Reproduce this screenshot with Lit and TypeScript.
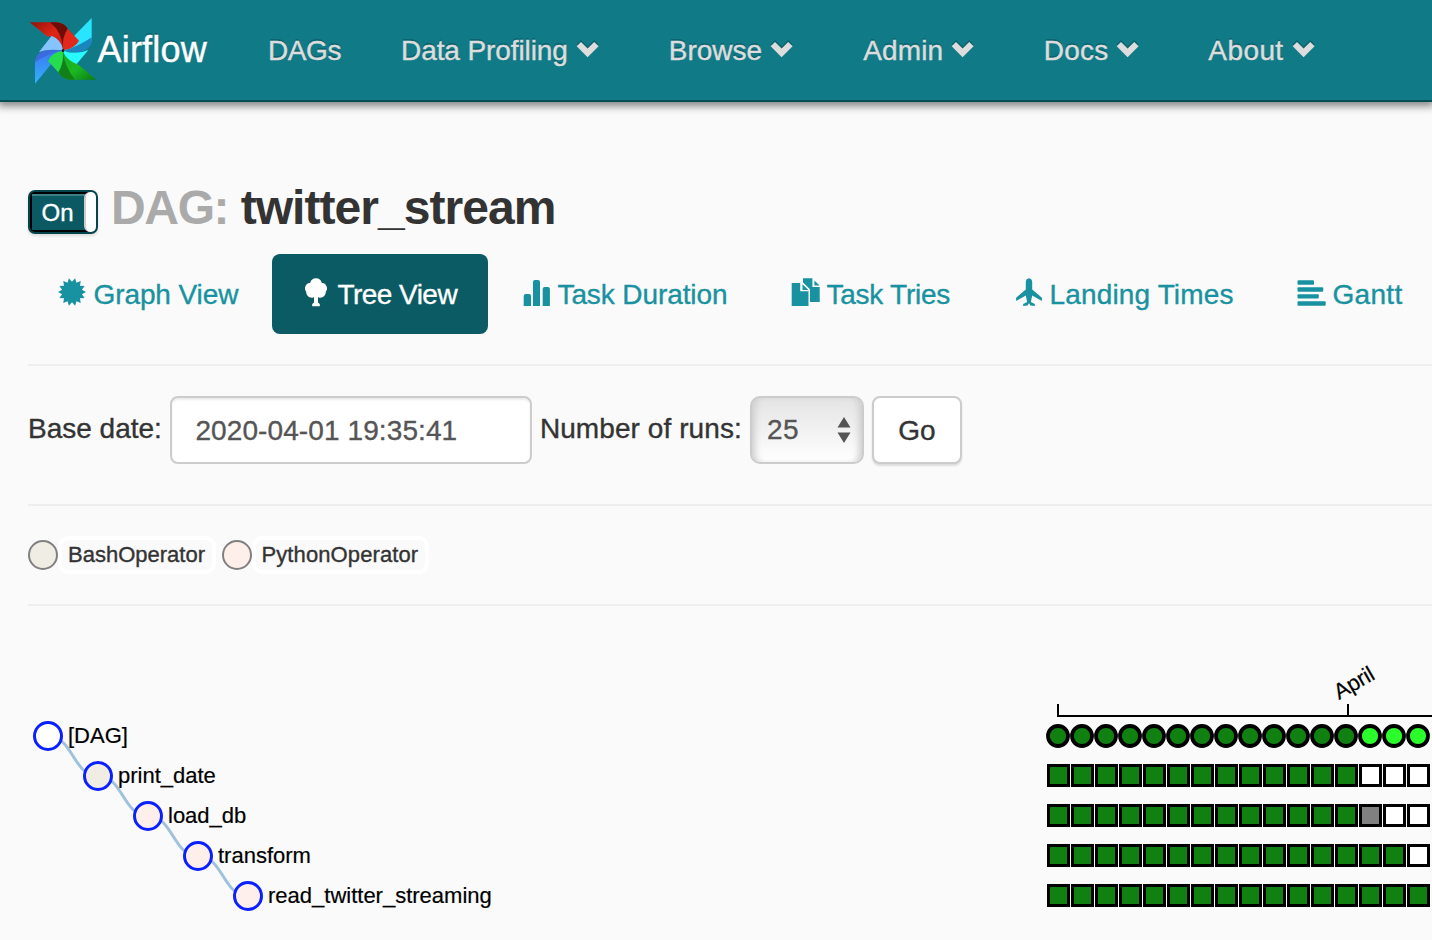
import { LitElement, html, svg, css } from "lit";
import { customElement } from "lit/decorators.js";

const spikes = (() => {
  const pts: string[] = [];
  for (let i = 0; i < 28; i++) {
    const a = (Math.PI / 14) * (i + 1);
    const r = i % 2 === 0 ? 14 : 10.2;
    pts.push(`${(14 + r * Math.sin(a)).toFixed(2)},${(14 - r * Math.cos(a)).toFixed(2)}`);
  }
  return pts.join(" ");
})();

const icons: Record<string, unknown> = {
  graph: svg`<polygon points=${spikes} />`,
  tree: svg`<path d="M14 .3c3 0 5.200 1.800 5.700 4.400 3 .2 5.300 2.700 5.300 5.700 0 1.300-.5 2.400-1.200 3.300.2 3.800-3.500 6.800-7 5.800l-.8-.5v5.500l1.800 1.600v2.100h-7.600v-2.100l1.800-1.600V19l-.8.5c-3.500 1-7.200-2-7-5.800C3.500 12.800 3 11.700 3 10.400c0-3 2.300-5.500 5.300-5.700C8.800 2.100 11 .3 14 .3z"/>`,
  bars: svg`<path d="M1.700 28V18q0-2 2-2h3.300q2 0 2 2v10zM11 28V4q0-2 2-2h3q2 0 2 2v24zM20.700 28V11q0-2 2-2h3.200q2 0 2 2v17z"/>`,
  copy: svg`<path d="M.7 5h8.500v8.300h8.300V28H.7zM11.500 6.300l5.900 5.700h-5.900zM12 .3h9.400v8.600h7.300v15H19V11.200L12 4.400zM23.400 2.600l5.200 4.900h-5.200z"/>`,
  plane: svg`<path d="M15 .3q3.200.4 3.200 4v7.200l9.700 8.300v3.100l-9.700-5.400-1.300 6.600 3.900 2v1.800l-4.300-.4L15 25.300l-1.500 2.200-4.300.4v-1.800l3.900-2-1.300-6.600-9.700 5.400v-3.100l9.700-8.300V4.300q0-3.600 3.200-4z"/>`,
  gantt: svg`<rect x=".5" y="2.200" width="16.500" height="4.600" rx="1"/><rect x=".5" y="9.200" width="25.700" height="4.500" rx="1"/><rect x=".5" y="16.200" width="21.300" height="4.400" rx="1"/><rect x=".5" y="23.300" width="28.200" height="4.500" rx="1"/>`,
};

const menu: [string, string][] = [
  ["DAGs", "dags"],
  ["Data Profiling", "data"],
  ["Browse", "browse"],
  ["Admin", "admin"],
  ["Docs", "docs"],
  ["About", "about"],
];

const tabs = [
  ["graph", "Graph View"],
  ["tree", "Tree View"],
  ["bars", "Task Duration"],
  ["copy", "Task Tries"],
  ["plane", "Landing Times"],
  ["gantt", "Gantt"],
];

const GREEN = "#108010";
const tasks = [
  { name: "[DAG]", fill: "#fff", blank: 0, queued: 0 },
  { name: "print_date", fill: "#f0ede4", blank: 3, queued: 0 },
  { name: "load_db", fill: "#ffefeb", blank: 2, queued: 1 },
  { name: "transform", fill: "#ffefeb", blank: 1, queued: 0 },
  { name: "read_twitter_streaming", fill: "#ffefeb", blank: 0, queued: 0 },
];
const RUNS = 16;

@customElement("af-logo")
export class AfLogo extends LitElement {
  static styles = css`
    :host { display: block; width: 68px; height: 68px; }
    svg { display: block; }
  `;
  render() {
    return html`<svg width="68" height="68" viewBox="87 51 204 204">
      <defs>
        <linearGradient id="r" x1="0" y1="0" x2="1" y2="1"><stop offset="0" stop-color="#8e1209"/><stop offset=".5" stop-color="#df2717"/><stop offset="1" stop-color="#b31a10"/></linearGradient>
        <linearGradient id="g" x1="0" y1="0" x2="1" y2="1"><stop offset="0" stop-color="#18a81f"/><stop offset=".55" stop-color="#1cb822"/><stop offset="1" stop-color="#0b7a12"/></linearGradient>
        <linearGradient id="b" x1="0" y1="0" x2="0" y2="1"><stop offset="0" stop-color="#3b78ec"/><stop offset="1" stop-color="#33b0ff"/></linearGradient>
      </defs>
      <path fill="#29e4ff" d="M275 54V122Q262 142 190 152L222 108Z"/>
      <path fill="#1a86bd" d="M275 112V130Q262 158 225 159Q205 160 190 153Q240 137 275 112Z"/>
      <path fill="#27fbff" d="M190 152Q228 166 265 150L222 202L196 187Z"/>
      <path fill="url(#b)" d="M105 251V184Q114 158 150 152L187 151L158 187Z"/>
      <path fill="#3c6be0" d="M105 187Q108 153 145 150L188 151Q139 163 105 187Z"/>
      <path fill="#86c4ff" d="M157 105L184 122Q190 137 188 151Q144 145 117 156Z"/>
      <path fill="url(#r)" d="M89 67H168Q193 68 204 88L190 150Q184 119 156 108L143 110Z"/>
      <path fill="#6e0c08" d="M150 67H169Q194 69 204 87Q191 105 190 150Q187 96 150 67Z"/>
      <path fill="#e0281b" d="M203 86L237 122Q224 146 190 151Q184 113 203 86Z"/>
      <path fill="url(#g)" d="M188 153Q200 183 235 194L289 239H210Q187 236 175 218Z"/>
      <path fill="#128018" d="M188 153Q192 197 225 239H207Q181 233 175 215Z"/>
      <path fill="#25dd4d" d="M188 153Q193 189 175 217L144 183Q155 157 188 153Z"/>
      <circle cx="189" cy="152" r="4" fill="#111"/>
    </svg>`;
  }
}

@customElement("af-navbar")
export class AfNavbar extends LitElement {
  static styles = css`
    :host { display: block; -webkit-text-stroke: .4px; }
    .bar { display: flex; height: 100px; padding-left: 29px; background: #117a87; border-bottom: 2px solid #074d57; box-shadow: 0 2px 8px 2px rgba(0, 0, 0, .48); white-space: nowrap; color: #ddd; text-shadow: 0 -2px 0 rgba(0, 0, 0, .2); overflow: visible; }
    .logo { padding-top: 17px; }
    .brand { box-sizing: border-box; width: 171px; padding: 29px 0 0 .5px; font-size: 36px; line-height: 42px; color: #fff; letter-spacing: .2px; }
    .menu { display: flex; gap: 60px; padding-top: 31px; line-height: 40px; }
    .item { display: flex; }
    .dags { letter-spacing: -.4px; }
    .data { letter-spacing: -.1px; }
    .browse, .admin { margin-left: 1px; }
    .docs { margin-left: .5px; letter-spacing: .2px; }
    .about { letter-spacing: .4px; }
    .admin { letter-spacing: .15px; }
    .chev { width: 40px; height: 40px; margin-top: -1px; filter: drop-shadow(0 -2px 0 rgba(0, 0, 0, .2)); fill: #ddd; }
  `;
  render() {
    return html`<nav class="bar">
      <af-logo class="logo"></af-logo>
      <div class="brand">Airflow</div>
      <div class="menu">
        ${menu.map(([label, name]) => html`<div class="item"><span class=${name}>${label}</span>${name !== "dags"
          ? html`<svg class="chev" viewBox="0 0 40 40"><path d="M8.700 16.300l4.300-4.300 6.600 6.500 6.600-6.500 4.400 4.300-11 11z"/></svg>`
          : ""}</div>`)}
      </div>
    </nav>`;
  }
}

@customElement("af-tree")
export class AfTree extends LitElement {
  static styles = css`
    :host { display: block; }
    svg { display: block; font-size: 22px; }
    text { stroke: #000; stroke-width: .2; }
    .link { fill: none; stroke: #9fc2dc; stroke-width: 3; }
    .node { stroke: #0a20ff; stroke-width: 3; }
    .box { stroke: #000; stroke-width: 3; }
    .run { stroke: #000; stroke-width: 3.800; }
    .axis { fill: none; stroke: #000; stroke-width: 2; }
  `;
  render() {
    const runs = [...Array(RUNS).keys()];
    return html`<svg width="1432" height="334" viewBox="0 606 1432 334">
      ${tasks.slice(1).map((_, i) => {
        const x = 48 + i * 50, y = 736 + i * 40;
        return svg`<path class="link" d="M${x} ${y}C${x + 25} ${y} ${x + 25} ${y + 40} ${x + 50} ${y + 40}"/>`;
      })}
      ${tasks.map((t, i) => svg`
        <circle class="node" cx=${48 + i * 50} cy=${736 + i * 40} r="13.5" fill=${t.fill}/>
        <text x=${68 + i * 50} y=${743 + i * 40}>${t.name}</text>`)}
      <path class="axis" d="M1058 704V716H1440M1348 704V716"/>
      <text transform="translate(1339 700) rotate(-30)" textLength="43">April</text>
      ${runs.map((n) => svg`<circle class="run" cx=${1058 + n * 24} cy="736" r="10" fill=${n < 13 ? GREEN : "#2bff2b"}/>`)}
      ${tasks.slice(1).map((t, i) => runs.map((n) => {
        const blank = n >= RUNS - t.blank;
        const queued = !blank && n >= RUNS - t.blank - t.queued;
        return svg`<rect class="box" x=${1048.5 + n * 24} y=${765.5 + i * 40} width="20" height="20" fill=${blank ? "#fff" : queued ? "#808080" : GREEN}/>`;
      }))}
    </svg>`;
  }
}

@customElement("app-root")
export class AppRoot extends LitElement {
  static styles = css`
    :host { display: block; width: 1432px; height: 940px; overflow: hidden; background: #fafafa; color: #333; font: 28px/40px "Liberation Sans", Arial, sans-serif; -webkit-text-stroke: .35px; }
    .heading { display: flex; padding: 80px 0 0 28px; height: 72px; }
    .toggle { box-sizing: border-box; display: flex; width: 70px; height: 44px; margin-top: 8px; border: 2px solid #06444d; border-radius: 7px; background: #0b5963; overflow: hidden; box-shadow: 0 2px 3px rgba(0, 0, 0, .12); }
    .on { box-sizing: border-box; flex: 1; border: solid #000; border-width: 2px 0 2px 2px; box-shadow: inset 0 2px 0 #3c7e86; color: #fff; font-size: 24px; line-height: 38px; padding-left: 9.500px; }
    .knob { box-sizing: border-box; width: 12px; border-left: 2px solid #ccc; border-radius: 6px 4px 4px 6px; background: #fff; margin-left: -4px; }
    .title { margin: -1px 0 0 13px; font-size: 48px; line-height: 54px; font-weight: bold; letter-spacing: -.95px; white-space: pre; -webkit-text-stroke: 0; }
    .dim { color: #aaa; letter-spacing: -1.350px; }
    .tabs { display: flex; gap: 4px; margin-left: 28px; white-space: nowrap; }
    .tab { box-sizing: border-box; flex: none; display: flex; gap: 7.500px; height: 80px; padding: 20px 30px; border-radius: 8px; color: #1892a0; fill: #1892a0; }
    .tab span { padding-top: 1px; }
    .tab svg { width: 28px; height: 28px; margin-top: 4px; overflow: visible; }
    .graph { width: 240px; letter-spacing: -.1px; }
    .tree { width: 216px; letter-spacing: -.55px; background: #0b5b65; color: #fff; fill: #fff; }
    .bars { width: 265px; letter-spacing: -.1px; }
    .copy { width: 219px; letter-spacing: -.25px; }
    .plane { width: 279px; letter-spacing: .15px; }
    .gantt { letter-spacing: .3px; }
    .rule { height: 2px; margin-left: 28px; background: #eee; }
    .first { margin-top: 30px; }
    .form { display: flex; height: 108px; padding: 30px 0 0 28px; white-space: nowrap; }
    .form label { padding-top: 13px; }
    .runs { width: 202px; letter-spacing: .08px; }
    .field { box-sizing: border-box; flex: none; height: 68px; border: 2px solid #ccc; border-radius: 8px; background: #fff; padding-top: 13px; }
    .date { width: 362px; margin: 0 8px; padding-left: 23.500px; color: #555; box-shadow: inset 0 2px 2px rgba(0, 0, 0, .075); letter-spacing: .1px; }
    .count { width: 114px; margin: 0 8px; display: flex; justify-content: space-between; padding: 12px 11px 0 15px; color: #555; border-radius: 10px; background: linear-gradient(#e4e4e4, #fff); box-shadow: inset 7px 0 7px -4px #ccc, inset -7px 0 7px -4px #ccc; letter-spacing: .5px; }
    .count svg { width: 14px; height: 26px; margin-top: 7px; fill: #555; }
    .go { width: 90px; text-align: center; box-shadow: 0 2px 2px rgba(0, 0, 0, .12); }
    .legend { display: flex; align-items: center; height: 98px; padding-left: 28px; font-size: 22px; line-height: 30px; }
    .dot { box-sizing: border-box; width: 30px; height: 30px; border: 2px solid #808080; border-radius: 50%; }
    .bash { background: #f0ede4; }
    .python { background: #ffefeb; margin-left: 6px; }
    .tag { box-sizing: border-box; width: 158px; height: 38px; border: 4px solid #fff; border-radius: 10px; padding-left: 6px; line-height: 29px; }
    .wide { width: 177px; padding-left: 5.500px; letter-spacing: .1px; }
  `;
  render() {
    return html`
      <af-navbar></af-navbar>
      <div class="heading">
        <div class="toggle"><span class="on">On</span><span class="knob"></span></div>
        <div class="title"><span class="dim">DAG:</span> twitter_stream</div>
      </div>
      <div class="tabs">
        ${tabs.map(([icon, label]) => html`<div class="tab ${icon}"><svg viewBox="0 0 28 28">${icons[icon]}</svg><span>${label}</span></div>`)}
      </div>
      <div class="rule first"></div>
      <div class="form">
        <label>Base date:</label>
        <div class="field date">2020-04-01 19:35:41</div>
        <label class="runs">Number of runs:</label>
        <div class="field count"><span>25</span><svg viewBox="0 0 14 26"><path d="M7 0l6.500 10.500H.5zM7 26L.5 15.500h13z"/></svg></div>
        <div class="field go">Go</div>
      </div>
      <div class="rule"></div>
      <div class="legend">
        <span class="dot bash"></span><span class="tag">BashOperator</span>
        <span class="dot python"></span><span class="tag wide">PythonOperator</span>
      </div>
      <div class="rule"></div>
      <af-tree></af-tree>`;
  }
}
